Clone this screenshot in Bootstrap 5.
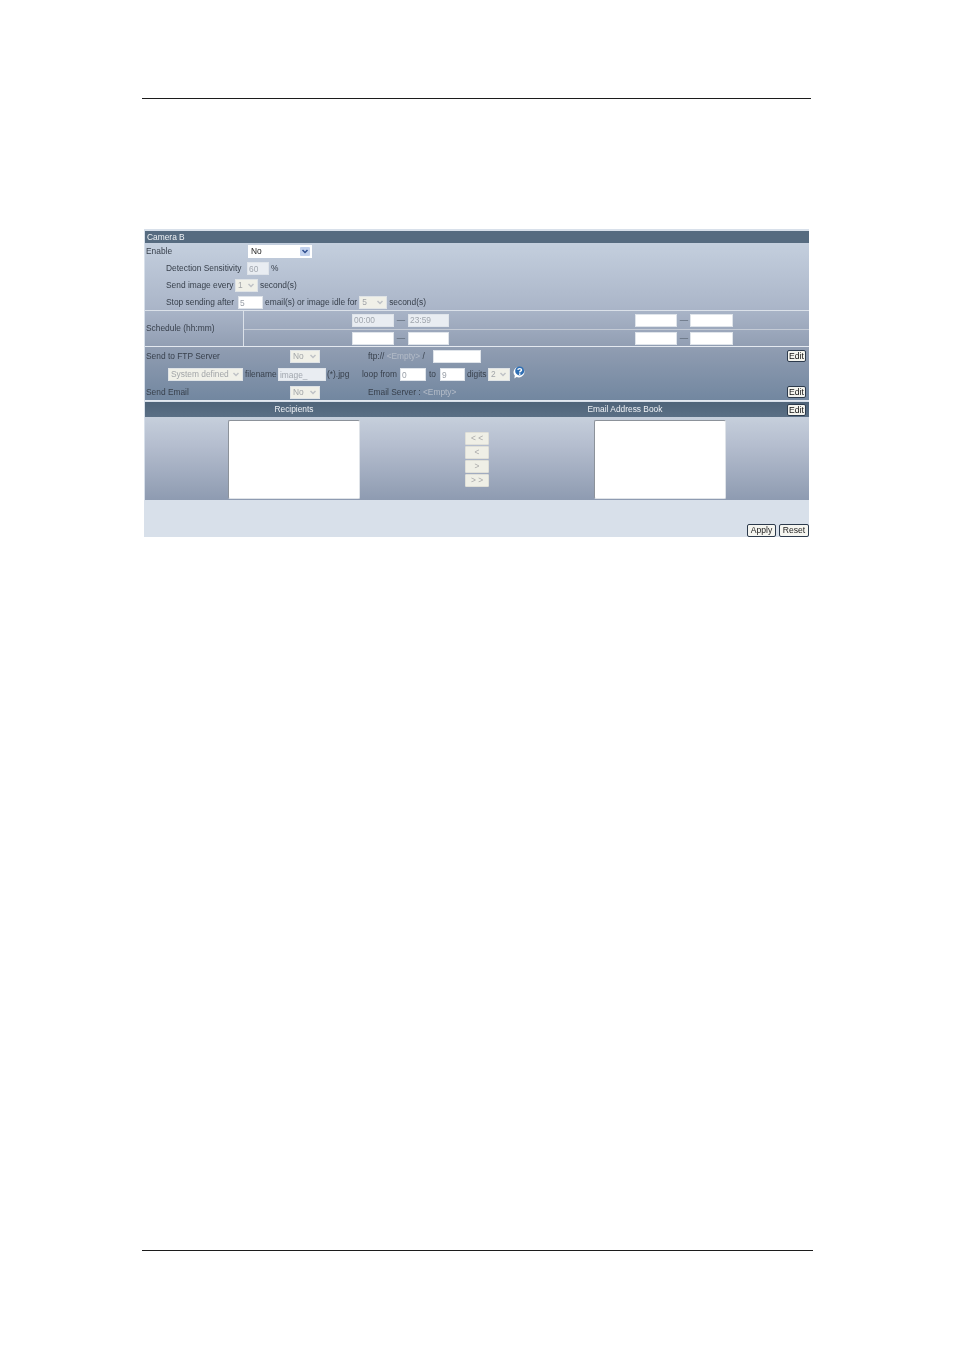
<!DOCTYPE html>
<html lang="en">
<head>
<meta charset="utf-8">
<title>Camera B</title>
<link rel="stylesheet" href="https://cdn.jsdelivr.net/npm/bootstrap@5.3.0/dist/css/bootstrap.min.css">
<style>
html,body{margin:0;background:#fff}
.sheet{width:954px;height:1350px;padding-top:98px}
.rule-top{height:1px;background:#1c1c1c;margin-left:142px;width:669px}
.rule-bot{height:1px;background:#1c1c1c;margin-left:142px;width:671px;margin-top:713px}
.panel{margin-left:144px;margin-top:130px;width:665px;height:308px;background:#d8e0ea;padding-top:2px;
 font:8.4px/1 "Liberation Sans",sans-serif;color:#38404c;filter:blur(.38px)}
.head{height:12px;background:#566b80;color:#f0f3f6;margin-left:1px;padding-left:2px}
.grad{margin-left:1px;background:linear-gradient(#c4cfde 0%,#aab5c8 42%,#8f9cb1 68%,#7287a0 100%);height:158px;border-bottom:1px solid #e4e9f0}
.rw{height:17px}
.sel{position:relative;display:block;flex:none;height:13px;border:1px solid #dfe3e6;background:#f0f0e8}
.sel select{appearance:none;border:0;background:transparent;width:100%;height:100%;padding:0 0 0 2px;font:inherit;color:#a2a5a8;display:block;opacity:1}
.sel svg{position:absolute;right:1px;top:1px;width:10px;height:9px}
.sel.on{background:#fff;border-color:#fff}
.sel.on select{color:#222}
.fld{display:block;flex:none;height:13px;border:1px solid #dfe4ea;background:#fff;padding:0 0 0 1px;font:inherit;color:#9aa0a8;border-radius:0}
.fld.off{background:#e9edf2;color:#a0a6ae}
.dim{color:#b4bcc8}
.ln1{margin-left:21px;width:81px}
.ln2{margin-left:21px;width:69px}
.ln3{margin-left:21px;width:72px}
.sl-enable{width:64px;margin-left:0}
.c-enable{width:102px;margin-left:1px}
.in-sens{width:22px}
.sl-one{width:23px}
.in-five{width:25px}
.sl-five{width:28px}
.gap2{margin-left:2px}
.sched{height:37px;margin-top:-1px;border-top:1px solid #dbe1e9;border-bottom:1px solid #e4e9f0}
.sched-lab{width:99px;padding-left:1px;border-right:1px solid #dbe1e9}
.sched-rows{flex:1}
.sr{height:18px;padding-left:108px}
.sr+.sr{height:17px;border-top:1px solid #c4cbd6}
.t1{width:42px}.t2{width:41px}
.t3{width:42px;margin-left:186px}.t4{width:43px;margin-left:-1px}
.dash{width:14px;text-align:center;color:#5b6674;flex:none}
.l-ftp{width:145px;padding-left:1px}
.sl-no{width:30px}
.f-proto{margin-left:48px;width:65px;white-space:nowrap}
.in-ftp{width:48px}
.edit{flex:none;width:19px;height:12px;padding:0;background:#f4f4ee;border:1px solid #2c3a4c;border-radius:2px;font:inherit;font-size:8.6px;line-height:10px;color:#111}
.edit-slot{margin-left:auto;margin-right:3px}
.rw-a{height:18px}.rw-b{height:19px}.rw-c{height:16px}
.sl-sys{width:75px;margin-left:23px}
.in-img{width:48px}
.in-lp{width:26px}
.in-lq{width:25px}
.sl-dg{width:22px}
.t-fn{width:35px;padding-left:2px}
.t-ext{width:36px;padding-left:1px}
.t-loop{width:38px;white-space:nowrap}
.t-to{width:14px;padding-left:3px}
.t-dg{width:23px;padding-left:2px}
.qmark{flex:none;width:14px;height:15px;margin-left:2px;margin-top:-4px}
.bar{margin-left:1px;height:15px;background:linear-gradient(#4f6479,#5a6f85);color:#eef1f5;margin-top:1px}
.bar-rec{width:298px;text-align:center}
.bar-book{width:286px;margin-left:39px;text-align:center}
.lists{margin-left:1px;height:83px;background:linear-gradient(#c6cfdc 0%,#b4bdce 35%,#8e9bb1 100%)}
.lbx{flex:none;width:132px;height:79px;background:#fff;border:1px solid #dfe3e8;border-top-color:#8c929a;border-left-color:#8c929a;margin-top:3px;padding:0}
.l-a{margin-left:83px}
.mv{margin-left:105px;width:24px;padding-top:15px;margin-right:105px}
.mvb{display:block;width:24px;height:13px;margin-bottom:1px;padding:0;background:#efefe6;border:1px solid #dfdfd8;border-radius:1px;font:inherit;color:#aaa}
.foot{height:38px}
.act{height:13px;padding:0;background:#f5f5f0;border:1px solid #2c3a4c;border-radius:2px;font:inherit;font-size:8.6px;color:#222;margin-top:24px}
.a1{width:29px}.a2{width:30px;margin-left:3px}
</style>
</head>
<body>
<div class="sheet">
 <div class="rule-top"></div>
 <div class="panel">
  <div class="head d-flex align-items-center">Camera B</div>
  <div class="grad">
   <div class="rw d-flex align-items-center">
    <div class="c-enable">Enable</div>
    <span class="sel on sl-enable"><select aria-label="Enable"><option>No</option></select><svg viewBox="0 0 10 9"><rect width="10" height="9" rx="1" fill="#c3d2ee"/><path d="M2.5 3 5 5.5 7.5 3" fill="none" stroke="#2f4f8f" stroke-width="1.5"/></svg></span>
   </div>
   <div class="rw d-flex align-items-center">
    <div class="ln1">Detection Sensitivity</div>
    <input class="fld off in-sens" value="60" disabled aria-label="Sensitivity"><span class="gap2">%</span>
   </div>
   <div class="rw d-flex align-items-center">
    <div class="ln2">Send image every</div>
    <span class="sel sl-one"><select disabled aria-label="Interval"><option>1</option></select><svg viewBox="0 0 10 9"><path d="M2.5 3 5 5.5 7.5 3" fill="none" stroke="#bfc2c6" stroke-width="1.5"/></svg></span><span class="gap2">second(s)</span>
   </div>
   <div class="rw d-flex align-items-center">
    <div class="ln3">Stop sending after</div>
    <input class="fld in-five" value="5" disabled aria-label="Emails"><span class="gap2">email(s) or image idle for</span>
    <span class="sel sl-five gap2"><select disabled aria-label="Idle"><option>5</option></select><svg viewBox="0 0 10 9"><path d="M2.5 3 5 5.5 7.5 3" fill="none" stroke="#bfc2c6" stroke-width="1.5"/></svg></span><span class="gap2">second(s)</span>
   </div>
   <div class="sched d-flex">
    <div class="sched-lab d-flex align-items-center">Schedule (hh:mm)</div>
    <div class="sched-rows">
     <div class="sr d-flex align-items-center">
      <input class="fld off t1" value="00:00" disabled aria-label="Start"><span class="dash">—</span><input class="fld off t2" value="23:59" disabled aria-label="End">
      <input class="fld t3" aria-label="Start 2"><span class="dash">—</span><input class="fld t4" aria-label="End 2">
     </div>
     <div class="sr d-flex align-items-center">
      <input class="fld t1" aria-label="Start 3"><span class="dash">—</span><input class="fld t2" aria-label="End 3">
      <input class="fld t3" aria-label="Start 4"><span class="dash">—</span><input class="fld t4" aria-label="End 4">
     </div>
    </div>
   </div>
   <div class="rw-a d-flex align-items-center">
    <div class="l-ftp">Send to FTP Server</div>
    <span class="sel sl-no"><select disabled aria-label="FTP"><option>No</option></select><svg viewBox="0 0 10 9"><path d="M2.5 3 5 5.5 7.5 3" fill="none" stroke="#bfc2c6" stroke-width="1.5"/></svg></span>
    <span class="f-proto">ftp:// <span class="dim">&lt;Empty&gt;</span> /</span>
    <input class="fld in-ftp" aria-label="FTP path">
    <button class="edit edit-slot" type="button">Edit</button>
   </div>
   <div class="rw-b d-flex align-items-center">
    <span class="sel sl-sys"><select disabled aria-label="Name"><option>System defined</option></select><svg viewBox="0 0 10 9"><path d="M2.5 3 5 5.5 7.5 3" fill="none" stroke="#bfc2c6" stroke-width="1.5"/></svg></span>
    <span class="t-fn">filename</span>
    <input class="fld off in-img" value="image_" disabled aria-label="Filename">
    <span class="t-ext">(*).jpg</span>
    <span class="t-loop">loop from</span>
    <input class="fld in-lp" value="0" disabled aria-label="From">
    <span class="t-to">to</span>
    <input class="fld in-lq" value="9" disabled aria-label="To">
    <span class="t-dg">digits</span>
    <span class="sel sl-dg"><select disabled aria-label="Digits"><option>2</option></select><svg viewBox="0 0 10 9"><path d="M2.5 3 5 5.5 7.5 3" fill="none" stroke="#bfc2c6" stroke-width="1.5"/></svg></span>
    <svg class="qmark" viewBox="0 0 15 15" role="img" aria-label="Help"><path d="M7.5 1.5a6 5.6 0 1 1-2.6 10.7L2.5 14l.5-3.4A6 5.6 0 0 1 7.5 1.5z" fill="#fff"/><circle cx="8.2" cy="5.8" r="4.8" fill="#2f6fb4"/><path d="M6.2 4.6c.3-1.6 4-1.7 4 .2 0 1.3-1.9 1.3-1.9 2.6" fill="none" stroke="#fff" stroke-width="1.5"/><circle cx="8.3" cy="9.2" r=".9" fill="#fff"/></svg>
   </div>
   <div class="rw-c d-flex align-items-center">
    <div class="l-ftp">Send Email</div>
    <span class="sel sl-no"><select disabled aria-label="Email"><option>No</option></select><svg viewBox="0 0 10 9"><path d="M2.5 3 5 5.5 7.5 3" fill="none" stroke="#bfc2c6" stroke-width="1.5"/></svg></span>
    <span class="f-proto">Email Server : <span class="dim">&lt;Empty&gt;</span></span>
    <button class="edit edit-slot" type="button">Edit</button>
   </div>
  </div>
  <div class="bar d-flex align-items-center">
   <div class="bar-rec">Recipients</div>
   <div class="bar-book">Email Address Book</div>
   <button class="edit edit-slot" type="button">Edit</button>
  </div>
  <div class="lists d-flex">
   <select class="lbx l-a" multiple aria-label="Recipients"></select>
   <div class="mv">
    <button class="mvb" type="button" disabled>&lt; &lt;</button>
    <button class="mvb" type="button" disabled>&lt;</button>
    <button class="mvb" type="button" disabled>&gt;</button>
    <button class="mvb" type="button" disabled>&gt; &gt;</button>
   </div>
   <select class="lbx" multiple aria-label="Email Address Book"></select>
  </div>
  <div class="foot d-flex justify-content-end">
   <button class="act a1" type="button">Apply</button>
   <button class="act a2" type="button">Reset</button>
  </div>
 </div>
 <div class="rule-bot"></div>
</div>
<script src="https://cdn.jsdelivr.net/npm/bootstrap@5.3.0/dist/js/bootstrap.bundle.min.js"></script>
</body>
</html>
